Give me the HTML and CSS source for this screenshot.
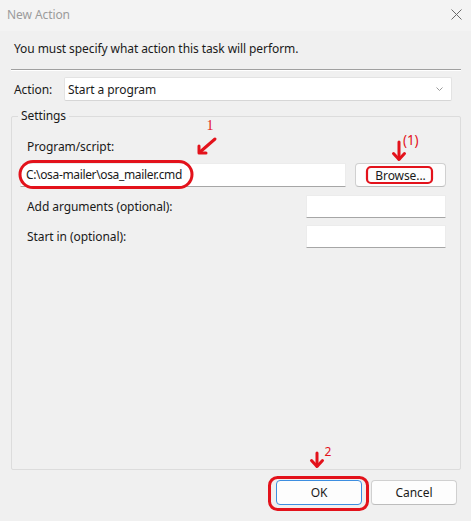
FILE: index.html
```html
<!DOCTYPE html>
<html>
<head>
<meta charset="utf-8">
<link rel="stylesheet" href="styles.css">
</head>
<body>
<div class="window">
  <div class="titlebar">
    <span class="title">New Action</span>
    <svg class="close" width="11" height="11" viewBox="0 0 11 11"><path d="M0.5 0.5 L10.5 10.5 M10.5 0.5 L0.5 10.5" stroke="#6a6a6a" stroke-width="1" fill="none"/></svg>
  </div>
  <div class="content">
    <p class="instr">You must specify what action this task will perform.</p>
    <div class="sep"></div>
    <div class="action-row">
      <span class="action-label">Action:</span>
      <div class="combo">
        <span>Start a program</span>
        <svg class="chev" width="7" height="4" viewBox="0 0 7 4"><path d="M0.5 0.5 L3.5 3.5 L6.5 0.5" stroke="#9a9a9a" stroke-width="1" fill="none"/></svg>
      </div>
    </div>
    <div class="group">
      <span class="legend">Settings</span>
      <div class="field-label">Program/script:</div>
      <div class="prog-row">
        <div class="input prog">C:\osa-mailer\osa_mailer.cmd</div>
        <button class="btn browse">Browse...</button>
      </div>
      <div class="opt-row first">
        <span class="field-label">Add arguments (optional):</span>
        <div class="input small"></div>
      </div>
      <div class="opt-row">
        <span class="field-label">Start in (optional):</span>
        <div class="input small"></div>
      </div>
    </div>
    <div class="buttons">
      <button class="btn ok">OK</button>
      <button class="btn cancel">Cancel</button>
    </div>
  </div>
  <svg class="annot" width="471" height="521" viewBox="0 0 471 521">
    <g fill="none" stroke="#e3121b" stroke-width="3" stroke-linecap="round" stroke-linejoin="round">
      <rect x="20" y="161.5" width="172" height="26" rx="13" ry="13"/>
      <rect x="367" y="167" width="65" height="16" rx="4" ry="4" stroke-width="2.2"/>
      <rect x="269.5" y="477.5" width="98" height="32" rx="8" ry="8"/>
      <path d="M215 139 L200 152"/>
      <path d="M199 146 L199 153 L206 153"/>
      <path d="M399 142 L399 159"/>
      <path d="M393.5 153.5 L399 159.5 L404.5 153.5"/>
      <path d="M317 453 L317 466"/>
      <path d="M311.5 460.5 L317 466.5 L322.5 460.5"/>
    </g>
    <text class="n1" x="206.5" y="130">1</text>
    <text class="n2" x="403" y="145">(1)</text>
    <text class="n3" x="324.5" y="455.5">2</text>
  </svg>
</div>
</body>
</html>
```

FILE: styles.css
```css
html, body {
  margin: 0;
  padding: 0;
}
body {
  width: 471px;
  height: 521px;
  background: #f0f0f0;
  font-family: "Noto Sans", "Open Sans", sans-serif;
  font-size: 12px;
  letter-spacing: -0.08px;
  color: #1a1a1a;
  overflow: hidden;
}
.window {
  position: relative;
  width: 471px;
  height: 521px;
}
.titlebar {
  height: 31px;
  background: #f3f3f3;
  display: flex;
  align-items: center;
  justify-content: space-between;
  padding: 0 9px 0 7px;
  box-sizing: border-box;
}
.title {
  color: #9b9b9b;
  font-size: 12px;
  line-height: 16px;
  margin-top: -2px;
}
.close {
  display: block;
  margin-top: -3px;
}
.content {
  padding: 0 10px 0 11px;
}
.instr {
  margin: 10px 0 0 3px;
  line-height: 16px;
  height: 16px;
}
.sep {
  margin-top: 12px;
  border-top: 1px solid #a0a0a0;
  border-bottom: 1px solid #ffffff;
}
.action-row {
  margin-top: 6px;
  display: flex;
  align-items: center;
  height: 24px;
}
.action-label {
  margin-left: 3px;
  width: 50px;
}
.combo {
  width: 388px;
  height: 24px;
  box-sizing: border-box;
  background: #ffffff;
  border: 1px solid #e3e3e3;
  border-bottom-color: #d6d6d6;
  border-radius: 2px;
  display: flex;
  align-items: center;
  justify-content: space-between;
  padding: 0 8px 0 3px;
}
.chev {
  display: block;
}
.group {
  position: relative;
  margin-top: 15px;
  height: 354px;
  box-sizing: border-box;
  border: 1px solid #dcdcdc;
  border-radius: 2px;
  padding: 22px 14px 0 8px;
}
.legend {
  position: absolute;
  top: -9px;
  left: 6px;
  padding: 0 3px;
  line-height: 16px;
  background: #f0f0f0;
}
.field-label {
  margin-left: 7px;
  line-height: 16px;
}
.prog-row {
  margin-top: 8px;
  display: flex;
  gap: 9px;
  height: 24px;
}
.input {
  background: #ffffff;
  box-sizing: border-box;
  border: 1px solid #ececec;
  border-bottom-color: #a6a6a6;
  border-radius: 1px;
  height: 24px;
  line-height: 22px;
}
.input.prog {
  width: 326px;
  padding-left: 5px;
  letter-spacing: -0.35px;
}
.input.small {
  width: 140px;
  height: 23px;
}
.btn {
  font-family: inherit;
  font-size: 12px;
  letter-spacing: -0.08px;
  color: #1a1a1a;
  background: #fdfdfd;
  border: 1px solid #d0d0d0;
  border-bottom-color: #bdbdbd;
  border-radius: 4px;
  padding: 0;
  margin: 0;
  box-sizing: border-box;
}
.browse {
  width: 91px;
  height: 24px;
}
.opt-row {
  display: flex;
  align-items: center;
  justify-content: space-between;
  height: 23px;
  margin-top: 7px;
}
.opt-row.first {
  margin-top: 8px;
}
.buttons {
  margin-top: 10px;
  display: flex;
  justify-content: flex-end;
  gap: 9px;
  padding-right: 4px;
}
.ok, .cancel {
  width: 86px;
  height: 25px;
}
.ok {
  border: 1px solid #3d8ee0;
}
.annot {
  position: absolute;
  top: 0;
  left: 0;
  pointer-events: none;
}
.n1 {
  font-family: "Liberation Serif", serif;
  font-size: 14px;
  fill: #e3121b;
}
.n2 {
  font-family: "Noto Sans", sans-serif;
  font-size: 13.5px;
  fill: #e3121b;
}
.n3 {
  font-family: "Noto Sans", sans-serif;
  font-size: 12px;
  fill: #e3121b;
}
```
